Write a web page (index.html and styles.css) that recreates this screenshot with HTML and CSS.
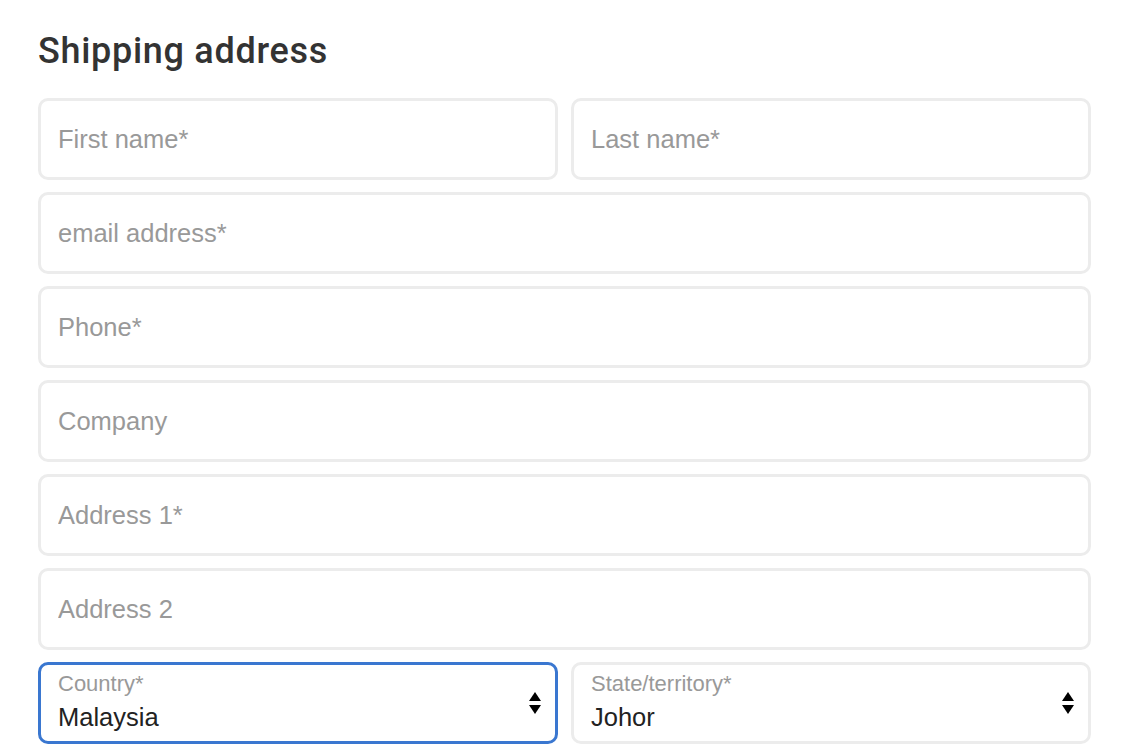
FILE: index.html
```html
<!DOCTYPE html>
<html lang="en">
<head>
<meta charset="utf-8">
<title>Shipping address</title>
<link rel="stylesheet" href="styles.css">
</head>
<body>
<form class="shipping">
  <h1 class="title">Shipping address</h1>
  <div class="fields">
    <div class="row two">
      <input class="field" type="text" placeholder="First name*">
      <input class="field" type="text" placeholder="Last name*">
    </div>
    <input class="field" type="email" placeholder="email address*">
    <input class="field" type="tel" placeholder="Phone*">
    <input class="field" type="text" placeholder="Company">
    <input class="field" type="text" placeholder="Address 1*">
    <input class="field" type="text" placeholder="Address 2">
    <div class="row two">
      <div class="select focused">
        <div class="select-text">
          <span class="select-label">Country*</span>
          <span class="select-value">Malaysia</span>
        </div>
        <svg class="arrows" width="12" height="22" viewBox="0 0 12 22"><polygon points="6,0 12,9 0,9"/><polygon points="0,13 12,13 6,22"/></svg>
      </div>
      <div class="select">
        <div class="select-text">
          <span class="select-label">State/territory*</span>
          <span class="select-value">Johor</span>
        </div>
        <svg class="arrows" width="12" height="22" viewBox="0 0 12 22"><polygon points="6,0 12,9 0,9"/><polygon points="0,13 12,13 6,22"/></svg>
      </div>
    </div>
  </div>
</form>
</body>
</html>
```

FILE: styles.css
```css
html, body {
  margin: 0;
  padding: 0;
  background: #ffffff;
}

body {
  font-family: "Liberation Sans", Arial, Helvetica, sans-serif;
}

.shipping {
  padding: 31px 0 0 38px;
  width: 1053px;
}

.title {
  margin: 0 0 27px 0;
  font-family: Roboto, "Liberation Sans", Arial, sans-serif;
  font-size: 36px;
  line-height: 40px;
  font-weight: 500;
  color: #333333;
  letter-spacing: 0.7px;
}

.fields {
  display: flex;
  flex-direction: column;
  gap: 12px;
}

.row.two {
  display: grid;
  grid-template-columns: 1fr 1fr;
  gap: 13px;
}

.field {
  box-sizing: border-box;
  width: 100%;
  height: 82px;
  margin: 0;
  padding: 0 17px;
  border: 3px solid #ececec;
  border-radius: 10px;
  background: #ffffff;
  font-family: "Liberation Sans", Arial, Helvetica, sans-serif;
  font-size: 25.5px;
  color: #222222;
  outline: none;
}

.field::placeholder {
  color: #999999;
  opacity: 1;
}

.select {
  box-sizing: border-box;
  height: 82px;
  border: 3px solid #ececec;
  border-radius: 10px;
  padding: 7px 14px 0 17px;
  display: flex;
  align-items: flex-start;
  justify-content: space-between;
}

.select.focused {
  border-color: #3a77d0;
}

.select-text {
  display: flex;
  flex-direction: column;
}

.select-label {
  font-size: 22px;
  line-height: 24px;
  color: #999999;
}

.select-value {
  margin-top: 6px;
  font-size: 25.5px;
  line-height: 30px;
  color: #222222;
}

.arrows {
  align-self: center;
  margin-top: -8px;
  fill: #000000;
}
```
